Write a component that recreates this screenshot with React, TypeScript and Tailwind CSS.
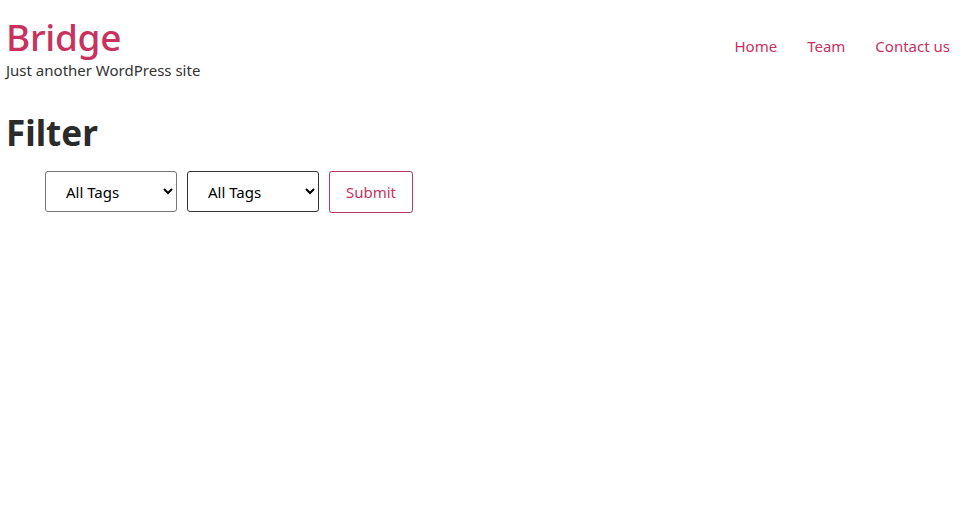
import React from "react";

export default function App() {
  const font = { fontFamily: '"Noto Sans", "Open Sans", sans-serif' };
  return (
    <div className="min-h-[518px] bg-white text-[#333]" style={font}>
      <header className="flex items-start justify-between pl-[6px] pr-[19px] pt-[15px]">
        <div>
          <div className="text-[37px] font-medium leading-[44px] text-[#c9315f] tracking-[-0.3px]">Bridge</div>
          <div className="mt-[1px] text-[15px] leading-[20px] text-[#333]">Just another WordPress site</div>
        </div>
        <nav className="flex gap-[30px] pt-[20px] text-[15px] text-[#c9315f]">
          <a>Home</a>
          <a>Team</a>
          <a>Contact us</a>
        </nav>
      </header>
      <main className="pl-[6px] pt-[32px]">
        <h1 className="text-[35px] font-bold leading-[42px] text-[#2b2b2b]">Filter</h1>
        <form className="flex gap-[10px] pl-[39px] pt-[17px]">
          <select className="h-[41px] w-[132px] rounded-[3px] border border-[#767676] bg-white pl-[16px] text-[15px] text-black">
            <option>All Tags</option>
          </select>
          <select className="h-[41px] w-[132px] rounded-[3px] border border-[#333] bg-white pl-[16px] text-[15px] text-black">
            <option>All Tags</option>
          </select>
          <button type="button" className="h-[42px] w-[84px] rounded-[3px] border border-[#b2386c] bg-white text-[15px] text-[#c9315f]">
            Submit
          </button>
        </form>
      </main>
    </div>
  );
}
